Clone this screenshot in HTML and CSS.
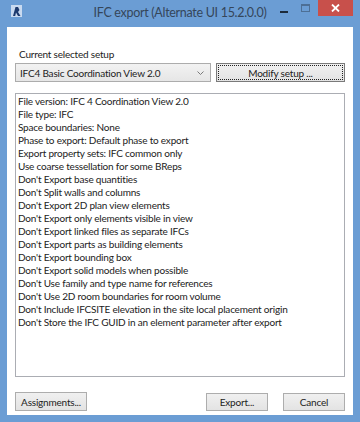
FILE: index.html
```html
<!DOCTYPE html>
<html lang="en">
<head>
<meta charset="UTF-8" />
<title>IFC export</title>
<link rel="stylesheet" href="styles.css">
</head>
<body>
  <div class="window">
    <div class="titlebar">
      <svg class="app-icon" width="11" height="12" viewBox="0 0 11 12">
        <rect x="0" y="0" width="11" height="12" fill="#c9daf0"/>
        <path d="M2 11 L4.5 2 L7 2 L8.5 5 L7 7 L9.5 11 L7 11 L5 7.5 L4.2 11 Z" fill="#1d3a6e"/>
      </svg>
      <div class="title">IFC export (Alternate UI 15.2.0.0)</div>
      <div class="caption-buttons">
        <span class="cap-min"></span>
        <span class="cap-max"></span>
        <span class="cap-close">
          <svg width="9" height="8" viewBox="0 0 9 8"><path d="M1 0.5 L8 7.5 M8 0.5 L1 7.5" stroke="#fff" stroke-width="1.8"/></svg>
        </span>
      </div>
    </div>
    <div class="client">
      <div class="label">Current selected setup</div>
      <div class="setup-row">
        <div class="combo">
          <span>IFC4 Basic Coordination View 2.0</span>
          <svg class="arrow" width="7" height="4" viewBox="0 0 7 4"><path d="M0.5 0.5 L3.5 3.5 L6.5 0.5" stroke="#7a7a7a" fill="none" stroke-width="1"/></svg>
        </div>
        <button class="btn btn-focus modify">Modify setup ...</button>
      </div>
      <div class="summary">
        <div>File version: IFC 4 Coordination View 2.0</div>
        <div>File type: IFC</div>
        <div>Space boundaries: None</div>
        <div>Phase to export: Default phase to export</div>
        <div>Export property sets: IFC common only</div>
        <div>Use coarse tessellation for some BReps</div>
        <div>Don't Export base quantities</div>
        <div>Don't Split walls and columns</div>
        <div>Don't Export 2D plan view elements</div>
        <div>Don't Export only elements visible in view</div>
        <div>Don't Export linked files as separate IFCs</div>
        <div>Don't Export parts as building elements</div>
        <div>Don't Export bounding box</div>
        <div>Don't Export solid models when possible</div>
        <div>Don't Use family and type name for references</div>
        <div>Don't Use 2D room boundaries for room volume</div>
        <div>Don't Include IFCSITE elevation in the site local placement origin</div>
        <div>Don't Store the IFC GUID in an element parameter after export</div>
      </div>
      <div class="footer">
        <button class="btn assign">Assignments...</button>
        <div class="spacer"></div>
        <button class="btn export">Export...</button>
        <button class="btn cancel">Cancel</button>
      </div>
    </div>
  </div>
</body>
</html>
```

FILE: styles.css
```css
body{margin:0;font-family:Lato,"Open Sans",sans-serif;font-size:10px;letter-spacing:-0.2px;color:#222;}
.window{width:360px;height:422px;background:#6b9dd4;display:flex;flex-direction:column;box-sizing:border-box;padding:0 7px 7px 7px;}
.titlebar{height:27px;display:flex;align-items:flex-start;position:relative;}
.app-icon{margin:5px 0 0 4px;}
.title{position:absolute;left:-7px;right:-7px;top:5px;text-align:center;font-size:12.5px;letter-spacing:-0.3px;color:#35465a;line-height:16px;}
.caption-buttons{margin-left:auto;display:flex;align-items:flex-start;height:16px;z-index:1;}
.cap-min{width:8px;height:2px;background:#1c2a3a;margin:11px 13px 0 0;}
.cap-max{width:7px;height:5px;border:1px solid #4d6f95;border-top-width:2px;margin:4px 8px 0 0;}
.cap-close{width:35px;height:16px;background:#c8504b;display:flex;align-items:center;justify-content:center;}
.client{flex:1;background:#fff;display:flex;flex-direction:column;padding:0 8px 4px 8px;}
.label{margin-top:21px;line-height:13px;height:13px;margin-bottom:2px;padding-left:4px;}
.setup-row{display:flex;gap:5px;height:19px;}
.combo{width:196px;box-sizing:border-box;border:1px solid #acacac;background:linear-gradient(#f2f2f2,#e6e6e6);display:flex;align-items:center;padding:0 0 0 4px;}
.combo span{flex:1;white-space:nowrap;}
.arrow{margin-right:6px;}
.btn{font:inherit;letter-spacing:inherit;color:#222;border:1px solid #adadad;background:linear-gradient(#f0f0f0,#e3e3e3);padding:0;height:19px;box-sizing:border-box;}
.btn-focus{border-color:#7a7a7a;outline:1px dotted #222;outline-offset:-3px;}
.modify{flex:1;}
.summary{margin-top:11px;height:284px;box-sizing:border-box;border:1px solid #abadb3;padding:1px 0 0 2px;line-height:13px;white-space:nowrap;overflow:hidden;}
.footer{margin-top:15px;display:flex;}
.spacer{flex:1;}
.assign{width:72px;}
.export{width:62px;height:18px;margin-top:1px;}
.cancel{width:62px;height:18px;margin-top:1px;margin-left:15px;}
```
